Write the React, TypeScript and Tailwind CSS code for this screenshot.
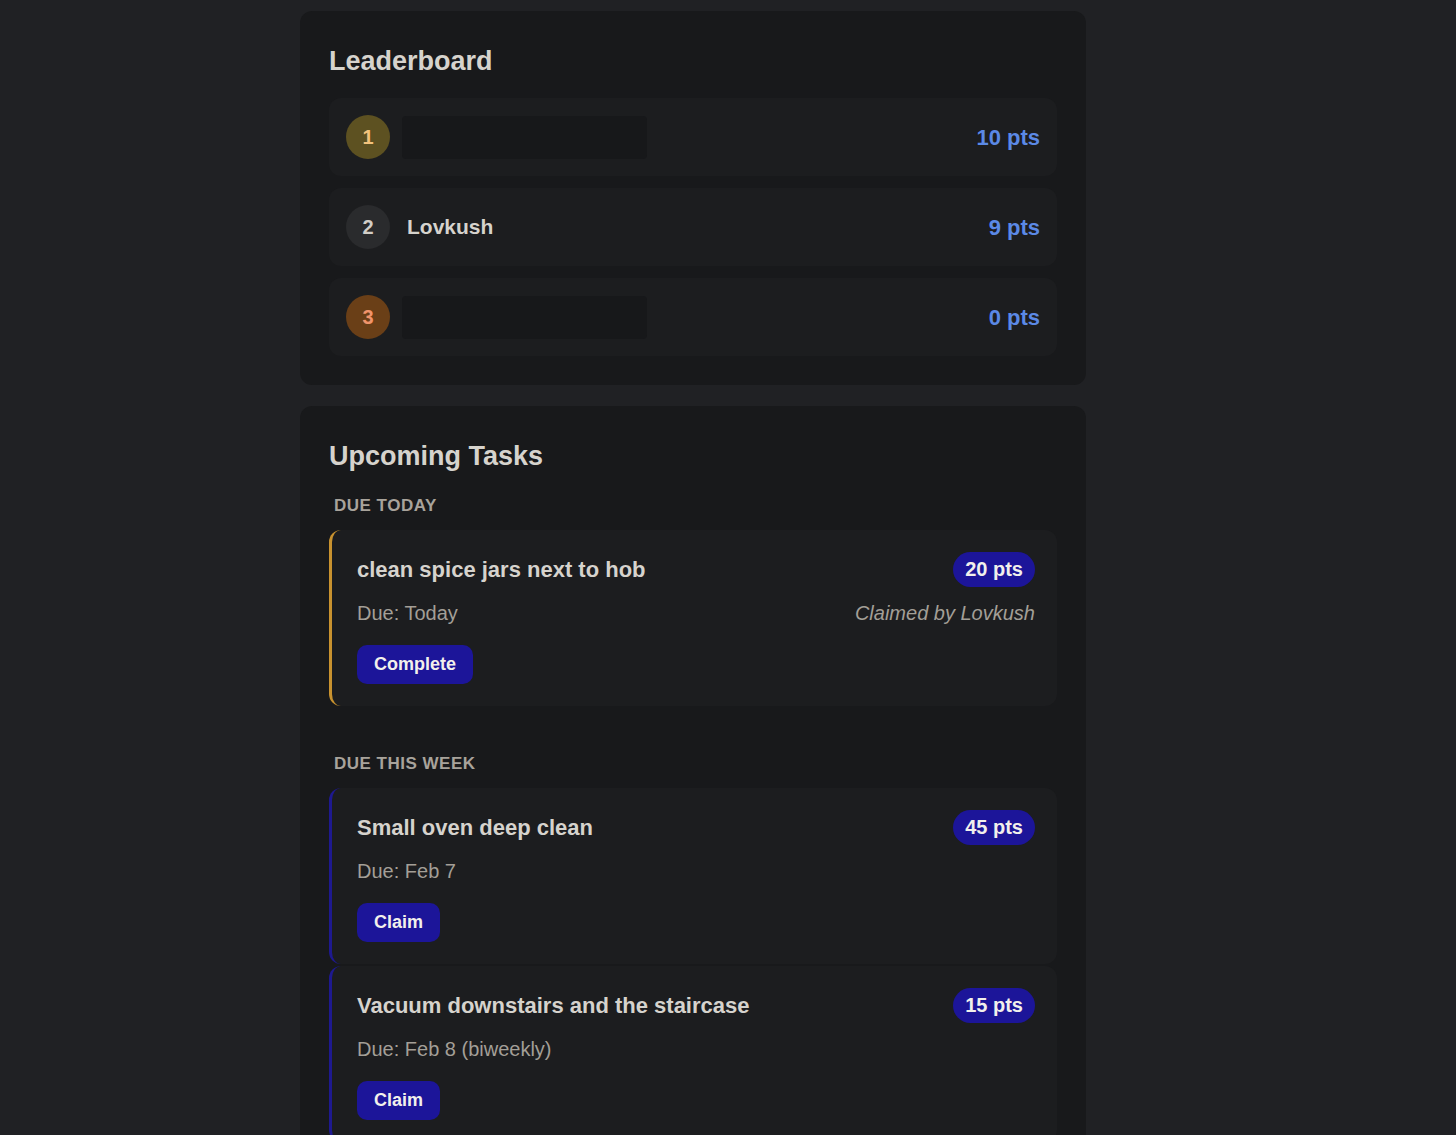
const FONT = { fontFamily: '"Liberation Sans", Arial, Helvetica, sans-serif' };

type Leader = { rank: number; name: string | null; points: number };

const LEADERS: Leader[] = [
  { rank: 1, name: null, points: 10 },
  { rank: 2, name: "Lovkush", points: 9 },
  { rank: 3, name: null, points: 0 },
];

const RANK_STYLES: Record<number, string> = {
  1: "bg-[#5d5121] text-[#f3c37c]",
  2: "bg-[#2a2b2d] text-[#d2cec7]",
  3: "bg-[#6a3f17] text-[#f1946b]",
};

type Task = {
  title: string;
  due: string;
  points: number;
  claimedBy?: string;
  action: "Complete" | "Claim";
};

const TODAY: Task[] = [
  { title: "clean spice jars next to hob", due: "Today", points: 20, claimedBy: "Lovkush", action: "Complete" },
];

const THIS_WEEK: Task[] = [
  { title: "Small oven deep clean", due: "Feb 7", points: 45, action: "Claim" },
  { title: "Vacuum downstairs and the staircase", due: "Feb 8 (biweekly)", points: 15, action: "Claim" },
];

function LeaderRow({ leader }: { leader: Leader }) {
  return (
    <div className="flex items-center gap-3 rounded-xl bg-[#1c1d1f] px-[17px] py-[17px]">
      <span
        className={`flex h-11 w-11 shrink-0 items-center justify-center rounded-full text-[20px] font-bold ${RANK_STYLES[leader.rank]}`}
      >
        {leader.rank}
      </span>
      {leader.name ? (
        <span className="pl-[5px] text-[21px] font-bold text-[#d6d3cd]">{leader.name}</span>
      ) : (
        <span className="h-[43px] w-[245px] rounded-sm bg-[#17181a]" />
      )}
      <span className="ml-auto text-[22px] font-bold text-[#5b89e6]">{leader.points} pts</span>
    </div>
  );
}

function TaskCard({ task, accent }: { task: Task; accent: string }) {
  return (
    <div className={`rounded-xl border-l-[3px] bg-[#1c1d1f] py-[22px] pl-[25px] pr-[22px] ${accent}`}>
      <div className="flex h-[35px] items-center justify-between">
        <h3 className="text-[22px] font-bold text-[#d6d3cd]">{task.title}</h3>
        <span className="rounded-full bg-[#1c1599] px-3 py-1 text-[20px] font-bold leading-[27px] text-[#f2f0ec]">
          {task.points} pts
        </span>
      </div>
      <div className="mt-[14px] flex items-center justify-between text-[20px] leading-6 text-[#a39f97]">
        <span>Due: {task.due}</span>
        {task.claimedBy && <span className="italic">Claimed by {task.claimedBy}</span>}
      </div>
      <button className="mt-5 h-[39px] rounded-[10px] bg-[#1c1599] px-[17px] text-[18px] font-bold text-[#f2f0ec]">
        {task.action}
      </button>
    </div>
  );
}

function SectionLabel({ children }: { children: string }) {
  return (
    <h4 className="mb-[14px] pl-[5px] text-[17px] font-bold uppercase leading-5 tracking-[0.5px] text-[#a8a39b]">
      {children}
    </h4>
  );
}

export default function App() {
  return (
    <div className="min-h-screen bg-[#202124] pt-[11px]" style={FONT}>
      <div className="ml-[300px] flex w-[786px] flex-col gap-[21px]">
        <section className="rounded-xl bg-[#18191b] p-[29px]">
          <h2 className="mb-4 text-[27px] font-bold leading-[42px] text-[#d6d3cd]">Leaderboard</h2>
          <div className="flex flex-col gap-3">
            {LEADERS.map(l => (
              <LeaderRow key={l.rank} leader={l} />
            ))}
          </div>
        </section>

        <section className="rounded-xl bg-[#18191b] p-[29px]">
          <h2 className="mb-[19px] text-[27px] font-bold leading-[42px] text-[#d6d3cd]">Upcoming Tasks</h2>

          <SectionLabel>Due today</SectionLabel>
          <div className="flex flex-col gap-[2px]">
            {TODAY.map(t => (
              <TaskCard key={t.title} task={t} accent="border-[#c8922f]" />
            ))}
          </div>

          <div className="mt-12">
            <SectionLabel>Due this week</SectionLabel>
            <div className="flex flex-col gap-[2px]">
              {THIS_WEEK.map(t => (
                <TaskCard key={t.title} task={t} accent="border-[#1e198f]" />
              ))}
            </div>
          </div>
        </section>
      </div>
    </div>
  );
}
